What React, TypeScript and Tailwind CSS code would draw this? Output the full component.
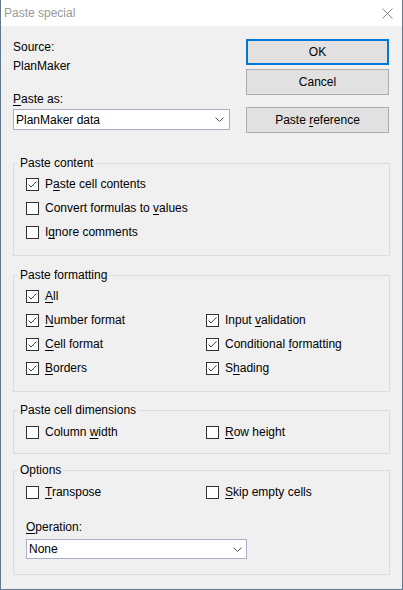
import React from 'react';

type Opt = { pre: string; acc: string; post: string; checked?: boolean };

// underlined accelerator letter, windows style
const Label = ({ pre, acc, post }: Opt) => (
  <span className="whitespace-nowrap">
    {pre}
    <u className="underline decoration-1 underline-offset-[2px]">{acc}</u>
    {post}
  </span>
);

const CheckBox = ({ checked }: { checked?: boolean }) => (
  <span className="w-[13px] h-[13px] border border-[#333333] bg-white flex items-center justify-center shrink-0">
    {checked && (
      <svg width="11" height="11" viewBox="0 0 11 11">
        <path d="M1.5 5.5 L4 8 L9.5 2.5" fill="none" stroke="#444444" strokeWidth="1" />
      </svg>
    )}
  </span>
);

const CheckRow = (props: Opt) => (
  <div className="flex items-center h-[24px] gap-[6px]">
    <CheckBox checked={props.checked} />
    <Label {...props} />
  </div>
);

const Chevron = () => (
  <svg width="9" height="5" viewBox="0 0 9 5">
    <path d="M0.5 0.5 L4.5 4.5 L8.5 0.5" fill="none" stroke="#555555" strokeWidth="1" />
  </svg>
);

const Group = ({ title, className, children }: { title: string; className: string; children: React.ReactNode }) => (
  <fieldset className={`border border-[#dcdcdc] px-0 ${className}`}>
    <legend className="ml-[4px] px-[2px] leading-[14px]">{title}</legend>
    {children}
  </fieldset>
);

const Button = ({ children, primary, className = '' }: { children: React.ReactNode; primary?: boolean; className?: string }) => (
  <button
    className={`h-[26px] w-full flex items-center justify-center bg-[#e1e1e1] ${
      primary ? 'border-2 border-[#0078d7]' : 'border border-[#adadad]'
    } ${className}`}
  >
    {children}
  </button>
);

export default function App() {
  return (
    <div className="w-[403px] h-[590px] bg-[#f0f0f0] border-x border-b border-[#62798f] flex flex-col font-['Liberation_Sans',sans-serif] text-[12px] text-black">
      {/* title bar */}
      <div className="h-[26px] bg-white flex items-center justify-between pl-[3px] pr-[9px] shrink-0">
        <span className="text-[#999999] text-[12px] pb-[1px]">Paste special</span>
        <svg width="11" height="11" viewBox="0 0 11 11">
          <path d="M0.5 0.5 L10.5 10.5 M10.5 0.5 L0.5 10.5" stroke="#8a8a8a" strokeWidth="1" />
        </svg>
      </div>

      <div className="px-[12px] pt-[13px] flex flex-col">
        {/* top area */}
        <div className="flex">
          <div className="w-[217px] flex flex-col">
            <div className="leading-[16px]">Source:</div>
            <div className="leading-[16px] mt-[3px]">PlanMaker</div>
            <div className="leading-[16px] mt-[17px]">
              <Label pre="" acc="P" post="aste as:" />
            </div>
            <div className="mt-[2px] h-[21px] bg-white border border-[#a6b0c0] flex items-center justify-between pl-[2px] pr-[5px]">
              <span>PlanMaker data</span>
              <Chevron />
            </div>
          </div>
          <div className="ml-[16px] w-[143px] flex flex-col">
            <Button primary>OK</Button>
            <Button className="mt-[4px]">Cancel</Button>
            <Button className="mt-[12px]">
              <Label pre="Paste " acc="r" post="eference" />
            </Button>
          </div>
        </div>

        <Group title="Paste content" className="mt-[23px] pb-[11px]">
          <div className="px-[12px] pt-[2px] flex flex-col">
            <CheckRow pre="P" acc="a" post="ste cell contents" checked />
            <CheckRow pre="Convert formulas to " acc="v" post="alues" />
            <CheckRow pre="I" acc="g" post="nore comments" />
          </div>
        </Group>

        <Group title="Paste formatting" className="mt-[12px] pb-[11px]">
          <div className="px-[12px] pt-[2px] grid grid-cols-[180px_1fr]">
            <CheckRow pre="" acc="A" post="ll" checked />
            <div />
            <CheckRow pre="" acc="N" post="umber format" checked />
            <CheckRow pre="Input " acc="v" post="alidation" checked />
            <CheckRow pre="" acc="C" post="ell format" checked />
            <CheckRow pre="Conditional " acc="f" post="ormatting" checked />
            <CheckRow pre="" acc="B" post="orders" checked />
            <CheckRow pre="S" acc="h" post="ading" checked />
          </div>
        </Group>

        <Group title="Paste cell dimensions" className="mt-[11px] pb-[9px]">
          <div className="px-[12px] pt-[3px] grid grid-cols-[180px_1fr]">
            <CheckRow pre="Column " acc="w" post="idth" />
            <CheckRow pre="" acc="R" post="ow height" />
          </div>
        </Group>

        <Group title="Options" className="mt-[9px] pb-[15px]">
          <div className="px-[12px] pt-[3px] flex flex-col">
            <div className="grid grid-cols-[180px_1fr]">
              <CheckRow pre="" acc="T" post="ranspose" />
              <CheckRow pre="" acc="S" post="kip empty cells" />
            </div>
            <div className="leading-[16px] mt-[15px]">
              <Label pre="" acc="O" post="peration:" />
            </div>
            <div className="mt-[4px] w-[221px] h-[20px] bg-white border border-[#a6b0c0] flex items-center justify-between pl-[2px] pr-[4px]">
              <span>None</span>
              <Chevron />
            </div>
          </div>
        </Group>
      </div>
    </div>
  );
}
